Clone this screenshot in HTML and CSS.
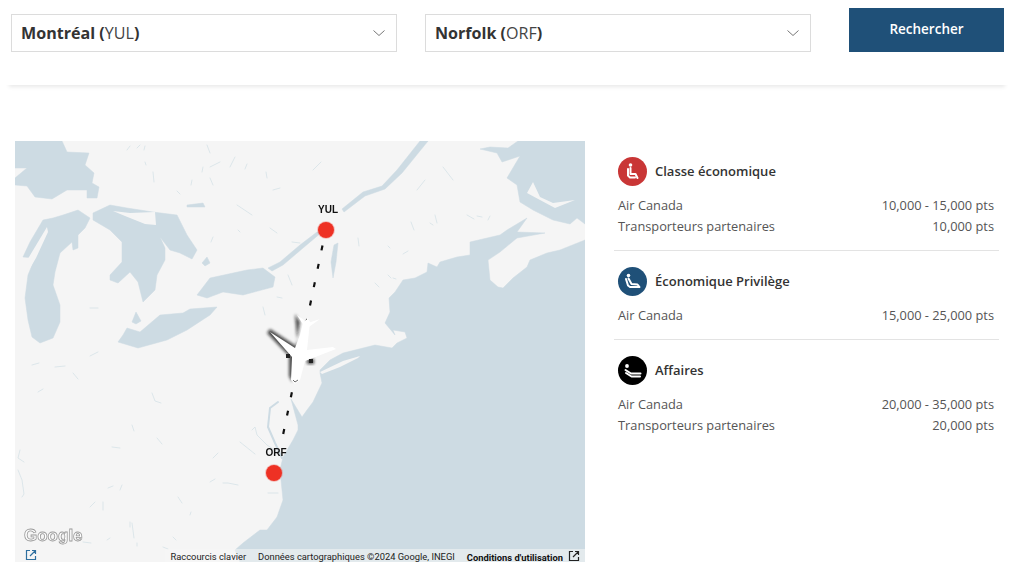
FILE: index.html
```html
<!DOCTYPE html>
<html lang="fr">
<head>
<meta charset="utf-8">
<title>Recherche de vols</title>
<link rel="stylesheet" href="styles.css">
</head>
<body>
<header class="search">
  <div class="select"><span class="city">Montréal (<span class="code">YUL</span>)</span>
    <svg class="chev" viewBox="0 0 12 6"><path d="M.5.5 6 5.5 11.5.5"/></svg></div>
  <div class="select"><span class="city">Norfolk (<span class="code">ORF</span>)</span>
    <svg class="chev" viewBox="0 0 12 6"><path d="M.5.5 6 5.5 11.5.5"/></svg></div>
  <button class="go">Rechercher</button>
</header>
<main class="content">
  <section class="map">
    <svg class="map-art" viewBox="15 141 570 421">
      <defs>
        <filter id="blur" x="-30%" y="-30%" width="160%" height="160%"><feGaussianBlur stdDeviation="1.500"/></filter>
      </defs>
      <rect class="land" x="15" y="141" width="570" height="421"/>
      <g class="water">
        <path d="M15 141 62 141 67 152 89 153 85 165 94 173 92 183 99 187 97 198 87 198 87 190 67 190 52 199 35 197 27 186 15 185 15 178 27 168 15 168Z"/>
        <path d="M23 257 30 242 43 220 53 218 63 215 78 210 90 218 85 228 78 235 78 248 73 250 72 242 60 253 55 272 53 285 60 305 60 322 53 338 40 343 32 337 28 320 25 298 28 275 35 258Z"/>
        <path d="M93 213 110 205 127 208 153 212 177 215 187 235 197 250 192 259 180 253 170 250 160 237 165 248 165 260 157 275 155 290 143 302 138 282 130 272 118 283 110 280 110 275 122 262 122 242 110 230 93 220Z"/>
        <path d="M132 322 136 312 141 321 136 324Z"/>
        <path d="M118 342 138 348 167 340 187 330 210 315 217 307 190 309 183 313 160 315 140 332 127 328 123 335Z"/>
        <path d="M197 295 210 278 247 270 263 268 275 277 273 287 243 295 223 292 207 298Z"/>
        <path d="M187 205 203 203 205 207 187 207Z"/>
        <path d="M202 263 207 257 210 263 205 266Z"/>
        <path d="M268 268 280 262 300 245 317 232 322 232 303 248 283 265 272 271Z"/>
        <path d="M342 209 363 192 382 186 397 170 420 141 428 141 402 173 385 189 365 196 344 212Z"/>
        <path d="M334 245 338 243 336 262 333 278 331 262Z"/>
        <path d="M518 141 508 148 490 147 480 149 497 153 502 162 520 156 507 178 517 185 520 202 533 210 553 220 570 224 577 218 585 224 585 141Z"/>
        <path d="M585 240 560 250 547 253 530 260 527 267 513 278 503 288 498 287 490 280 488 260 500 252 517 238 545 233 517 232 527 218 507 230 500 235 470 242 470 255 457 257 440 262 437 267 428 263 427 272 415 278 403 280 395 292 389 298 390 312 385 323 395 335 393 330 405 332 407 338 397 343 392 348 375 345 355 350 343 353 330 360 320 370 320 373 322 383 313 402 307 410 302 417 291 399 298 425 298 430 293 440 283 457 280 470 282 490 283 500 277 517 267 530 260 530 243 543 235 550 240 562 585 562Z"/>
      </g>
      <path class="land" d="M533 182 527 193 540 200 555 208 575 200 553 203 540 197Z"/>
      <path class="land" d="M113 211 130 213 155 212 156 225 145 224 125 216Z"/>
      <path class="land" d="M320 372 343 361 360 356 358 358 340 367 322 374Z"/>
      <path class="land" d="M26 262 47 227 48 232 36 258 30 268Z"/>
      <g class="rivers">
        <path d="M127 150l3-4M137 148l3-3M144 150l1-4M153 172l1 10M145 162l1 3M177 191l3 3M203 167l-1 5M220 162l-10 5M235 157l-5 10M247 164l-2 5M266 172l1 6M192 180l-1 5M210 178l3 7M280 188l-7 2M237 205l15 10M238 230l2 2M270 228l7 5M213 237l-2 5M288 275l4 10M263 307l2 8M277 297l5 1M90 308l8 0M207 145l3 8"/>
        <path d="M313 170l8-8M411 222l3 8M435 215l2 8M430 223l3 2M358 238l1 8M443 167l10 13M417 190l8-10M467 215l7 4M477 216l5 1M490 216l-2 4M375 283l4 4M388 275l3 3M393 278l3 1M388 246l2 2M403 254l5-3M300 243l-8-1"/>
        <path d="M90 356l8-4M32 365l7-2M55 367l10-1M73 373l5 6M38 392l5-3M152 393l3 8 6 2M132 425l2 6M112 447l8 1M157 438l5 6M20 450l-2 8 6 4M18 470l4 10 2 14-2 3M213 458l5-5M223 483l5 0 10 2M210 482l5-3M178 497l4 6M103 502v8M90 507l5-5M120 490l2-5M108 488l5-2M130 522v5M132 523l2 15M83 542l8 1M107 540l3-2M137 543v3M163 547l5 2M173 537l3 3M190 515l1-3"/>
        <path d="M252 430l3-3 2 8 10 10 12 8M240 442l15 12M268 493l10 0"/>
        <path class="bay" d="M278 402l-8 6-2 19 7 16 7 15"/>
      </g>
      <path class="route" d="M322.500 245.500 283 435"/>
      <path class="plane-shadow" filter="url(#blur)" d="M295 314 300 322 296 346 270 329 267 333 289 356 289 376 292 382 298 350 Z"/>
      <path class="plane-shadow" filter="url(#blur)" d="M307 359h7v5h-7z"/>
      <g class="plane">
        <path d="M297 315 304 320 305 324 320 319 306 329 Z"/>
        <path d="M303 323 308 318 310 322 307 350 333 347 336 349 305 361 300 380 295 384 291 380 292 357 270 332 295 348 300 335Z"/>
        <path class="engine" d="M286 354h4v4h-4zM309 359h4v4h-4z"/>
        <path class="nose" d="M293 380l2 2 3-2"/>
      </g>
      <circle class="halo" cx="326" cy="230" r="9"/>
      <circle class="pin" cx="326" cy="230" r="8"/>
      <circle class="halo" cx="274" cy="473" r="9"/>
      <circle class="pin" cx="274" cy="473" r="8"/>
      <text class="iata" x="328" y="213">YUL</text>
      <text class="iata" x="276" y="456">ORF</text>
      <text class="google" x="24" y="541">Google</text>
    </svg>
    <svg class="ext ext-left" viewBox="0 0 12 12"><path d="M5 1.500H1.500v9h9V7M7 1.500h3.500V5M10.500 1.500 5 7"/></svg>
    <div class="attrib">
      <span class="attrib-item">Raccourcis clavier</span>
      <span class="attrib-item">Données cartographiques ©2024 Google, INEGI</span>
      <span class="attrib-item attrib-bold">Conditions d'utilisation</span>
      <svg class="ext ext-right" viewBox="0 0 12 12"><path d="M5 1.500H1.500v9h9V7M7 1.500h3.500V5M10.500 1.500 5 7"/></svg>
    </div>
  </section>
  <aside class="fares">
    <section class="cabin">
      <h2 class="cabin-head">
        <svg class="seat seat-eco" viewBox="0 0 29 29"><circle cx="12.500" cy="8" r="1.800"/><path d="M12.500 11v6h5l2 4M10 12v6.500l2 2h5"/></svg>
        Classe économique</h2>
      <div class="row"><span>Air Canada</span><span>10,000 - 15,000 pts</span></div>
      <div class="row"><span>Transporteurs partenaires</span><span>10,000 pts</span></div>
    </section>
    <section class="cabin">
      <h2 class="cabin-head">
        <svg class="seat seat-prem" viewBox="0 0 29 29"><circle cx="10.500" cy="8.500" r="1.800"/><path d="M10.500 11.500l3 5.500 6 .5 2 2.500M8 12l2 6.500 2 1.500h8.500"/></svg>
        Économique Privilège</h2>
      <div class="row"><span>Air Canada</span><span>15,000 - 25,000 pts</span></div>
    </section>
    <section class="cabin">
      <h2 class="cabin-head">
        <svg class="seat seat-biz" viewBox="0 0 29 29"><circle cx="9" cy="10" r="1.900"/><path d="M7.500 14 13 17.500h9.500M8 17l5.500 3.500h8.500"/></svg>
        Affaires</h2>
      <div class="row"><span>Air Canada</span><span>20,000 - 35,000 pts</span></div>
      <div class="row"><span>Transporteurs partenaires</span><span>20,000 pts</span></div>
    </section>
  </aside>
</main>
</body>
</html>
```
FILE: styles.css
```css
* { box-sizing: border-box; }
html, body { margin: 0; height: 583px; overflow: hidden; background: #fff; }
body { font-family: "Open Sans", "Liberation Sans", sans-serif; color: #333; }

.search {
  display: flex;
  align-items: flex-end;
  height: 85px;
  margin: 0 15px 0 5px;
  padding: 0 5px 33px 6px;
  background: #fff;
  box-shadow: 0 6px 4px -4px rgba(0, 0, 0, .09);
}
.select {
  flex: none;
  display: flex;
  align-items: center;
  justify-content: space-between;
  width: 386px;
  height: 38px;
  padding: 0 11px 0 9px;
  border: 1px solid #dcdcdc;
  background: #fff;
}
.select + .select { margin-left: 28px; }
.city { font-size: 16.100px; font-weight: 700; color: #333; }
.code { font-weight: 400; color: #444; }
.chev { width: 12px; height: 6px; fill: none; stroke: #777; stroke-width: 1; }
.go {
  flex: none;
  width: 155px;
  height: 44px;
  margin-left: 38px;
  padding: 0 0 2px;
  border: 0;
  background: #1f5078;
  color: #fff;
  font: 600 13.500px "Open Sans", sans-serif;
}

.content { display: flex; align-items: flex-start; padding: 56px 0 0 15px; }
.map { position: relative; flex: none; width: 570px; height: 421px; }
.map-art { display: block; width: 570px; height: 421px; filter: blur(.35px); }
.land { fill: #f5f5f5; }
.water { fill: #cddbe3; stroke: #cddbe3; stroke-width: .5; stroke-linejoin: round; }
.rivers { fill: none; stroke: #d9e4e9; stroke-width: .9; stroke-linecap: round; }
.rivers .bay { stroke: #cddbe3; stroke-width: 2; }
.route { fill: none; stroke: #111; stroke-width: 2.200; stroke-dasharray: 5 13.750; }
.plane-shadow { fill: #111; opacity: .75; }
.plane { fill: #fff; }
.engine { fill: #222; }
.nose { fill: none; stroke: #444; stroke-width: .8; }
.pin { fill: #ee3124; }
.halo { fill: #ee3124; opacity: .25; }
.iata { font: 700 10px "Liberation Sans", sans-serif; fill: #111; text-anchor: middle; }
.google {
  font: 700 17px "Liberation Sans", sans-serif;
  fill: #fff;
  stroke: #999;
  stroke-width: .8;
}
.ext { fill: none; stroke-width: 1.200; }
.ext-left { position: absolute; left: 10px; bottom: 1px; width: 12px; height: 12px; stroke: #2f6f9f; }
.ext-right { flex: none; width: 12px; height: 12px; margin-bottom: 1px; stroke: #222; }
.attrib {
  position: absolute;
  right: 0;
  bottom: 0;
  display: flex;
  align-items: center;
  height: 13px;
  padding: 1px 5px 0 0;
  font: 400 9.350px Roboto, "Liberation Sans", sans-serif;
  color: #222;
  background: rgba(245, 245, 245, .55);
  white-space: nowrap;
}
.attrib-item { padding: 0 5px; }
.attrib-item + .attrib-item { margin-left: 2px; }
.attrib-bold { padding-top: 3px; font-weight: 700; color: #111; }

.fares { flex: none; width: 385px; margin-left: 29px; }
.cabin { padding: 15px 5px 13px 4px; }
.cabin + .cabin { border-top: 1px solid #e3e3e3; }
.cabin-head {
  display: flex;
  align-items: center;
  gap: 8px;
  height: 30px;
  margin: 0 0 9px;
  font-size: 13px;
  font-weight: 600;
  color: #333;
}
.seat { flex: none; width: 29px; height: 29px; border-radius: 50%; fill: none; stroke: #fff; stroke-width: 2; stroke-linecap: round; stroke-linejoin: round; }
.seat circle { fill: #fff; stroke: none; }
.seat-eco { background: #c93636; }
.seat-prem { background: #1f5078; }
.seat-biz { background: #000; }
.row { display: flex; justify-content: space-between; height: 21px; font-size: 12.800px; line-height: 21px; color: #555; }
```
